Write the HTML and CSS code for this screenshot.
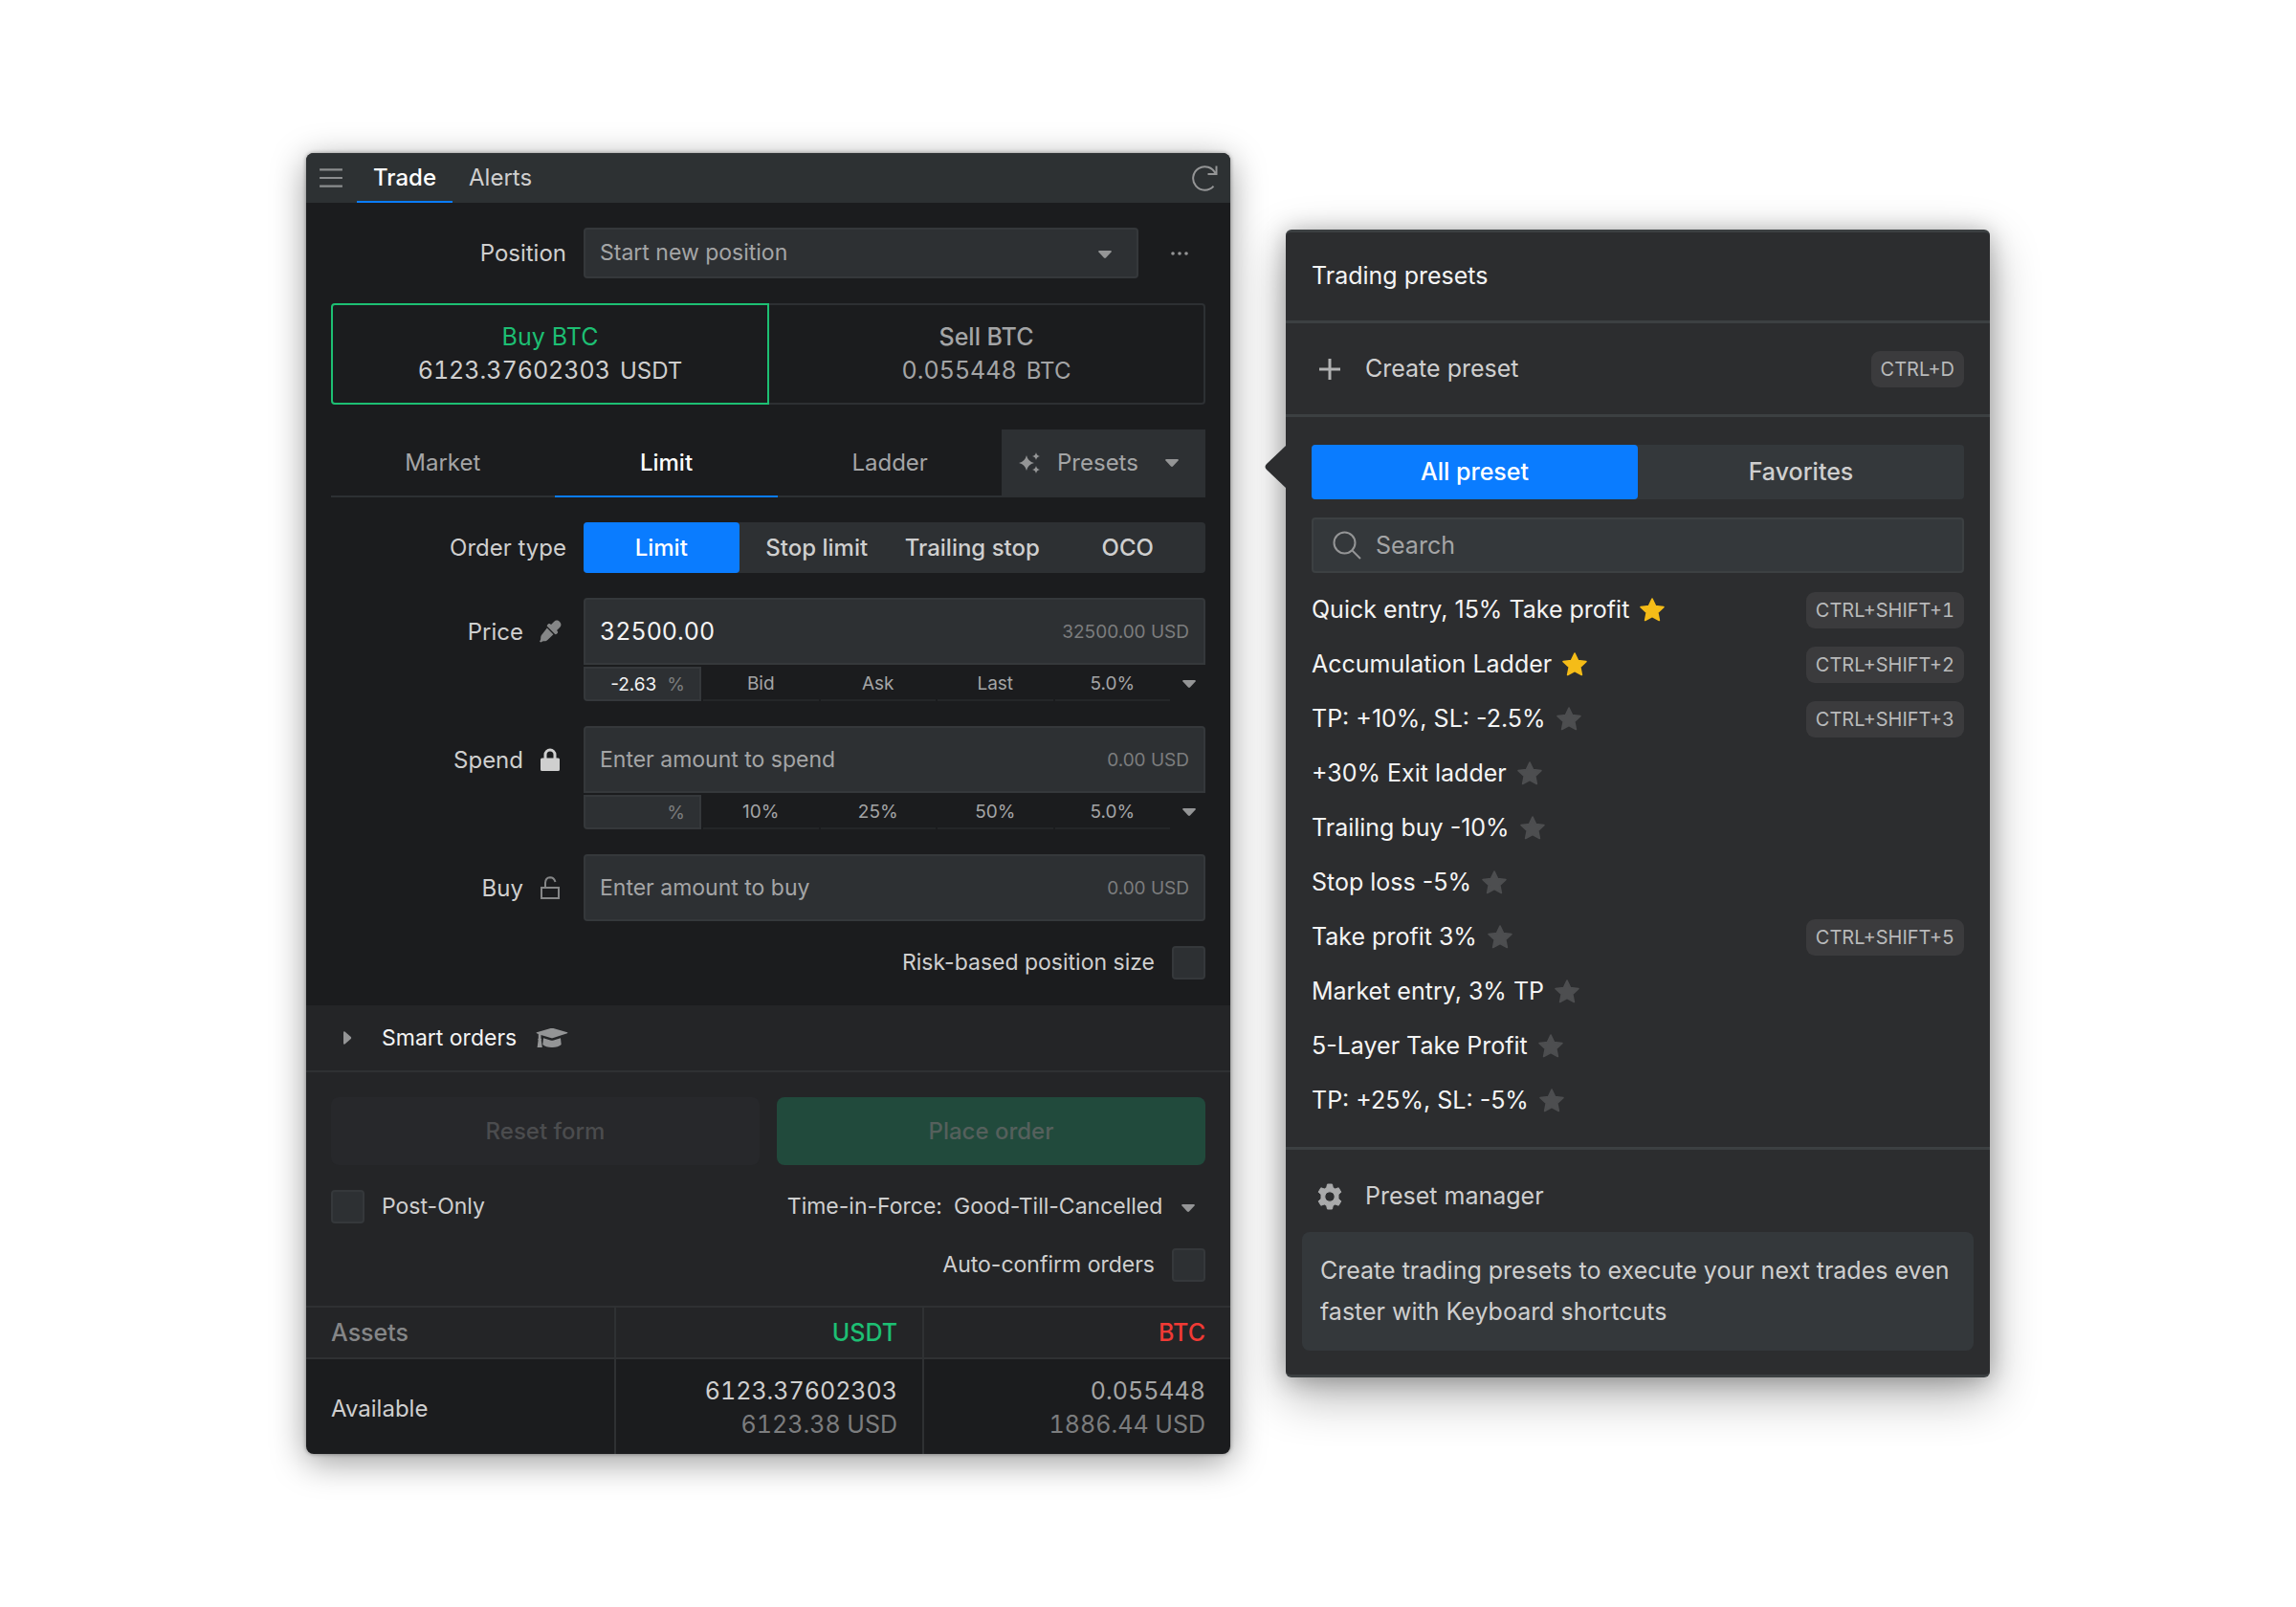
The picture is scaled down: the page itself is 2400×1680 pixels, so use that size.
FILE: index.html
```html
<!DOCTYPE html>
<html lang="en">
<head>
    <meta charset="UTF-8">
    <meta name="viewport" content="width=device-width, initial-scale=1.0">
    <title>Trade</title>
    <link rel="stylesheet" href="styles.css">
</head>
<body>
    <!-- Shared icons -->
    <svg class="sprite" aria-hidden="true">
        <symbol id="caret" viewBox="0 0 16 10">
            <path d="M2 1h12q1.500 .3.600 1.500L9 8.500q-1 .9-2 0L1.400 2.500Q.5 1.300 2 1z"/>
        </symbol>
        <symbol id="star" viewBox="0 0 24 24">
            <path d="M12 1l3.300 7 7.700.9-5.700 5.200 1.500 7.600L12 18l-6.800 3.700 1.500-7.600L1 8.900 8.700 8z" stroke-width="1.500" stroke-linejoin="round"/>
        </symbol>
    </svg>

    <main class="page">
        <section class="trade">
            <header class="trade-header">
                <button class="icon-btn" aria-label="Menu">
                    <svg class="icon-menu" viewBox="0 0 24 20"><path d="M1 2h22M1 10h22M1 18h22"/></svg>
                </button>
                <nav class="top-tabs">
                    <a href="#trade" class="active">Trade</a>
                    <a href="#alerts">Alerts</a>
                </nav>
                <button class="icon-btn refresh" aria-label="Refresh">
                    <svg class="icon-refresh" viewBox="0 0 28 28"><path d="M25.500 1.500v8.500h-9M24.500 9.500A12.200 12.200 0 1 0 22.500 22.600"/></svg>
                </button>
            </header>

            <form class="order-form" id="orderForm">
                <div class="row">
                    <label class="row-label" for="position">Position</label>
                    <div class="position-field">
                        <div class="select-wrap">
                            <select id="position">
                                <option>Start new position</option>
                            </select>
                            <svg class="caret"><use href="#caret"/></svg>
                        </div>
                        <button type="button" class="more" aria-label="More">
                            <svg viewBox="0 0 18 4"><circle cx="2" cy="2" r="1.800"/><circle cx="9" cy="2" r="1.800"/><circle cx="16" cy="2" r="1.800"/></svg>
                        </button>
                    </div>
                </div>

                <div class="sides">
                    <button type="button" class="side buy">
                        <span class="side-name">Buy BTC</span>
                        <span class="side-amount"><span class="number">6123.37602303</span><span>USDT</span></span>
                    </button>
                    <button type="button" class="side sell">
                        <span class="side-name">Sell BTC</span>
                        <span class="side-amount"><span class="number">0.055448</span><span>BTC</span></span>
                    </button>
                </div>

                <div class="order-tabs">
                    <button type="button">Market</button>
                    <button type="button" class="active">Limit</button>
                    <button type="button">Ladder</button>
                    <button type="button" class="presets-btn">
                        <svg class="icon-sparkle" viewBox="0 0 24 24"><path d="M9 4q1.500 6.500 8 8-6.500 1.500-8 8-1.500-6.500-8-8 6.500-1.500 8-8zM19 1q.7 3.300 4 4-3.300.7-4 4-.7-3.300-4-4 3.300-.7 4-4zM19 15q.7 3.300 4 4-3.300.7-4 4-.7-3.300-4-4 3.300-.7 4-4z"/></svg>
                        <span>Presets</span>
                        <svg class="caret"><use href="#caret"/></svg>
                    </button>
                </div>

                <div class="row">
                    <span class="row-label">Order type</span>
                    <div class="segmented">
                        <button type="button" class="active">Limit</button>
                        <button type="button">Stop limit</button>
                        <button type="button">Trailing stop</button>
                        <button type="button">OCO</button>
                    </div>
                </div>

                <div class="row">
                    <label class="row-label tall" for="price">Price
                        <svg class="icon-label muted" viewBox="0 0 24 24"><path d="M22 2c2 2 1.800 4.200.3 5.700L19 11l.8.900c.6.700.4 1.500-.1 2l-.9.900c-.6.500-1.300.5-1.900 0L9.200 7.100c-.6-.6-.5-1.300 0-1.900l.9-.9c.6-.5 1.400-.6 2 0l.9.800L16.300 1.700C17.800.200 20 0 22 2zM8.800 8.600l6.600 6.600-6 5.800c-1 1-2.200 1.300-3.400 1.200-1.400 0-2.500.2-3.500 1.300L1 22.800c.8-1.500 1.200-2.200 1.200-3.600 0-1.800.4-3 1.400-4z"/></svg>
                    </label>
                    <div class="field with-steps">
                        <div class="amount">
                            <input type="text" class="number" id="price" value="32500.00">
                            <span class="unit">32500.00 USD</span>
                        </div>
                        <div class="steps">
                            <label class="percent"><input type="text" value="-2.63" aria-label="Price change"><span>%</span></label>
                            <button type="button">Bid</button>
                            <button type="button">Ask</button>
                            <button type="button">Last</button>
                            <button type="button">5.0%</button>
                            <button type="button" class="steps-more" aria-label="More"><svg class="caret"><use href="#caret"/></svg></button>
                        </div>
                    </div>
                </div>

                <div class="row">
                    <label class="row-label tall" for="spend">Spend
                        <svg class="icon-label light" viewBox="0 0 24 24"><path d="M3.500 10.500h2V7a6.500 6.500 0 0 1 13 0v3.500h2q1.500 0 1.500 1.500v10.500q0 1.500-1.500 1.500h-17Q2 24 2 22.500V12q0-1.500 1.500-1.500zm5 0h7V7a3.500 3.500 0 0 0-7 0z"/></svg>
                    </label>
                    <div class="field with-steps">
                        <div class="amount">
                            <input type="text" id="spend" placeholder="Enter amount to spend">
                            <span class="unit">0.00 USD</span>
                        </div>
                        <div class="steps">
                            <label class="percent"><input type="text" aria-label="Spend percent"><span>%</span></label>
                            <button type="button">10%</button>
                            <button type="button">25%</button>
                            <button type="button">50%</button>
                            <button type="button">5.0%</button>
                            <button type="button" class="steps-more" aria-label="More"><svg class="caret"><use href="#caret"/></svg></button>
                        </div>
                    </div>
                </div>

                <div class="row">
                    <label class="row-label tall" for="buy">Buy
                        <svg class="icon-label outline" viewBox="0 0 24 24"><path d="M3 12h18v11H3zM7 12V7q.3-5.500 5-5.700Q16 1.300 17.500 6"/></svg>
                    </label>
                    <div class="field">
                        <div class="amount">
                            <input type="text" id="buy" placeholder="Enter amount to buy">
                            <span class="unit">0.00 USD</span>
                        </div>
                    </div>
                </div>

                <label class="check end">Risk-based position size <input type="checkbox"></label>
            </form>

            <button class="smart-orders">
                <svg class="icon-right" viewBox="0 0 10 16"><path d="M1 2.200q.2-1.500 1.500-.7l6.300 5.600q.9.900 0 1.800l-6.300 5.600Q1.200 15.300 1 13.800z"/></svg>
                <span>Smart orders</span>
                <svg class="icon-cap" viewBox="0 0 34 22"><path d="M17 1q.7-.2 1.400 0L33 5.300q1 .5 0 1L18.400 11q-1.400.4-2.800 0L5.500 7.900v3.600q1 .8.300 1.900l1 7.600H1.600l1-7.600q-.9-1.100.2-1.900V7L1 6.300q-1-.5 0-1L15.600 1q.7-.2 1.400 0zM8 11.200l7.200 2.200q1.800.5 3.600 0l7.200-2.200.7 6.800q-3 3-9.700 3.100-6.700-.1-9.700-3.100z"/></svg>
            </button>

            <div class="actions">
                <div class="action-buttons">
                    <button type="reset" form="orderForm" class="reset" disabled>Reset form</button>
                    <button type="submit" form="orderForm" class="place" disabled>Place order</button>
                </div>
                <div class="action-options">
                    <label class="check"><input type="checkbox"> Post-Only</label>
                    <div class="tif">
                        <label for="tif">Time-in-Force:</label>
                        <div class="select-wrap plain">
                            <select id="tif">
                                <option>Good-Till-Cancelled</option>
                            </select>
                            <svg class="caret"><use href="#caret"/></svg>
                        </div>
                    </div>
                </div>
                <label class="check end">Auto-confirm orders <input type="checkbox"></label>
            </div>

            <table class="assets">
                <thead>
                    <tr><th>Assets</th><th class="green">USDT</th><th class="red">BTC</th></tr>
                </thead>
                <tbody>
                    <tr>
                        <td>Available</td>
                        <td><span class="number bright">6123.37602303</span><span class="number usd">6123.38 USD</span></td>
                        <td><span class="number">0.055448</span><span class="number usd">1886.44 USD</span></td>
                    </tr>
                </tbody>
            </table>
        </section>

        <aside class="presets">
            <svg class="arrow" viewBox="0 0 22 44"><path d="M22 0L2 19q-3 3 0 6l20 19z"/></svg>
            <h2>Trading presets</h2>
            <button class="preset-action">
                <svg class="icon-plus" viewBox="0 0 22 22"><path d="M11 0v22M0 11h22"/></svg>
                <span>Create preset</span>
                <kbd>CTRL+D</kbd>
            </button>

            <div class="preset-body">
                <div class="segmented big">
                    <button class="active">All preset</button>
                    <button>Favorites</button>
                </div>
                <label class="search">
                    <svg viewBox="0 0 30 30"><circle cx="12.500" cy="12.500" r="11"/><path d="M20.500 20.500l8.500 8.500"/></svg>
                    <input type="text" placeholder="Search" aria-label="Search">
                </label>
                <ul class="preset-list">
                    <li><a href="#">Quick entry, 15% Take profit</a><button class="star on" aria-label="Favorite"><svg><use href="#star"/></svg></button><kbd>CTRL+SHIFT+1</kbd></li>
                    <li><a href="#">Accumulation Ladder</a><button class="star on" aria-label="Favorite"><svg><use href="#star"/></svg></button><kbd>CTRL+SHIFT+2</kbd></li>
                    <li><a href="#">TP: +10%, SL: -2.5%</a><button class="star" aria-label="Favorite"><svg><use href="#star"/></svg></button><kbd>CTRL+SHIFT+3</kbd></li>
                    <li><a href="#">+30% Exit ladder</a><button class="star" aria-label="Favorite"><svg><use href="#star"/></svg></button></li>
                    <li><a href="#">Trailing buy -10%</a><button class="star" aria-label="Favorite"><svg><use href="#star"/></svg></button></li>
                    <li><a href="#">Stop loss -5%</a><button class="star" aria-label="Favorite"><svg><use href="#star"/></svg></button></li>
                    <li><a href="#">Take profit 3%</a><button class="star" aria-label="Favorite"><svg><use href="#star"/></svg></button><kbd>CTRL+SHIFT+5</kbd></li>
                    <li><a href="#">Market entry, 3% TP</a><button class="star" aria-label="Favorite"><svg><use href="#star"/></svg></button></li>
                    <li><a href="#">5-Layer Take Profit</a><button class="star" aria-label="Favorite"><svg><use href="#star"/></svg></button></li>
                    <li><a href="#">TP: +25%, SL: -5%</a><button class="star" aria-label="Favorite"><svg><use href="#star"/></svg></button></li>
                </ul>
            </div>

            <button class="preset-action manager">
                <svg class="icon-gear" viewBox="0 0 28 28"><path fill-rule="evenodd" d="M11.500 1h5l.8 3.600 2.400 1.400 3.500-1.200 2.600 4.400-2.800 2.500v4.600l2.800 2.500-2.600 4.400-3.500-1.200-2.400 1.400-.8 3.600h-5l-.8-3.600-2.400-1.400-3.500 1.200-2.600-4.400L5 16.300v-4.600L2.200 9.200l2.600-4.400L8.300 6l2.400-1.400zM14 8.800a5.200 5.200 0 1 0 0 10.400 5.200 5.200 0 0 0 0-10.400z"/></svg>
                <span>Preset manager</span>
            </button>
            <p class="hint">Create trading presets to execute your next trades even faster with Keyboard shortcuts</p>
        </aside>
    </main>
</body>
</html>
```
FILE: styles.css
```css
* {
    box-sizing: border-box;
}
body {
    margin: 0;
    min-height: 100vh;
    display: flex;
    align-items: center;
    justify-content: center;
    background-color: #fff;
    color: #cfcfcf;
    font-family: Inter, "Liberation Sans", sans-serif;
    font-size: 24px;
    line-height: 35px;
}
button,
input,
select {
    font: inherit;
    color: inherit;
    margin: 0;
    padding: 0;
    border: none;
    border-radius: 0;
    background: none;
    outline: none;
}
button {
    cursor: pointer;
}
a {
    color: inherit;
    text-decoration: none;
}
svg {
    display: block;
    flex-shrink: 0;
    fill: #949596;
}
.sprite {
    position: absolute;
    width: 0;
    height: 0;
}
.caret {
    width: 16px;
    height: 10px;
}
.page {
    width: 100%;
    max-width: 1760px;
    display: grid;
    grid-template-columns: 966fr 736fr;
    gap: 58px;
    align-items: center;
}

/* Trade panel */
.trade {
    border-radius: 8px;
    background-color: #1b1c1e;
    box-shadow: 0 8px 36px rgba(0, 0, 0, 0.4), 0 0 4px rgba(0, 0, 0, 0.4);
    overflow: hidden;
}
.trade-header {
    height: 52px;
    padding: 0 12px 0 13px;
    display: flex;
    align-items: stretch;
    background-color: #2d3133;
}
.icon-btn {
    display: flex;
    align-items: center;
}
.icon-menu {
    width: 26px;
    height: 22px;
    fill: none;
    stroke: #8b8d8e;
    stroke-width: 2;
}
.icon-refresh {
    width: 28px;
    height: 28px;
    fill: none;
    stroke: #949596;
    stroke-width: 2;
}
.refresh {
    margin-left: auto;
}
.top-tabs {
    display: flex;
    margin-left: 14px;
}
.top-tabs a {
    padding: 8px 17px;
    line-height: 35px;
}
.top-tabs .active {
    color: #fff;
    font-weight: 500;
    border-bottom: 2px solid #0a7cff;
}
.order-form {
    padding: 26px 26px 27px;
    display: flex;
    flex-direction: column;
    gap: 26px;
}
.row {
    display: grid;
    grid-template-columns: 246px 1fr;
    gap: 18px;
}
.row-label {
    display: flex;
    align-items: center;
    justify-content: flex-end;
}
.row-label.tall {
    height: 70px;
    gap: 16px;
    padding-right: 5px;
}
.icon-label {
    width: 24px;
    height: 24px;
}
.icon-label.muted {
    fill: #858687;
}
.icon-label.light {
    fill: #cfcfcf;
}
.icon-label.outline {
    fill: none;
    stroke: #858687;
    stroke-width: 2;
}
.position-field {
    display: flex;
}
.select-wrap {
    position: relative;
    flex: 1;
    font-size: 23px;
}
.select-wrap select {
    width: 100%;
    height: 53px;
    padding: 0 15px;
    appearance: none;
    border: 2px solid #35383b;
    border-radius: 4px;
    background-color: #2d3033;
    color: #a4a5a6;
}
.select-wrap .caret {
    position: absolute;
    right: 27px;
    top: 50%;
    margin-top: -4px;
    pointer-events: none;
}
.more {
    width: 70px;
    padding-left: 34px;
}
.more svg {
    width: 18px;
    height: 4px;
}
.sides {
    display: flex;
}
.side {
    flex: 1;
    height: 106px;
    display: flex;
    flex-direction: column;
    align-items: center;
    justify-content: center;
    border: 2px solid #2d3033;
}
.side.buy {
    border-color: #1dbf73;
    border-radius: 4px 0 0 4px;
}
.side.sell {
    border-left: none;
    border-radius: 0 4px 4px 0;
    color: #a4a5a6;
}
.side-name {
    font-size: 25px;
    font-weight: 500;
}
.buy .side-name {
    color: #1dbf73;
    font-weight: 400;
}
.side-amount {
    display: flex;
    gap: 10px;
}
.number {
    font-size: 25px;
    font-variant-numeric: tabular-nums;
}
.order-tabs {
    display: grid;
    grid-template-columns: 1fr 1fr 1fr 213px;
    height: 71px;
}
.order-tabs button {
    border-bottom: 2px solid #2d3033;
    color: #a4a5a6;
}
.order-tabs .active {
    border-bottom-color: #0a7cff;
    color: #fff;
    font-weight: 500;
}
.order-tabs .presets-btn {
    display: flex;
    align-items: center;
    gap: 17px;
    padding: 0 27px 0 17px;
    background-color: #2d3033;
}
.presets-btn .caret {
    margin-left: auto;
}
.icon-sparkle {
    width: 24px;
    height: 24px;
}
.segmented {
    display: flex;
    height: 53px;
    border-radius: 4px;
    background-color: #2d3033;
}
.segmented button {
    flex: 1 1 0;
    white-space: nowrap;
    font-weight: 500;
}
.segmented .active {
    border-radius: 4px;
    background-color: #0a7cff;
    color: #fff;
}
.amount {
    height: 70px;
    padding: 0 15px;
    display: flex;
    align-items: center;
    border: 2px solid #35383b;
    border-radius: 4px;
    background-color: #2d3033;
}
.with-steps .amount {
    border-radius: 4px 4px 0 0;
}
.amount input {
    flex: 1;
    min-width: 0;
    height: 60px;
    font-size: 23px;
    color: #f4f4f4;
}
.amount .number {
    font-size: 25px;
}
input::placeholder {
    color: #a4a5a6;
    opacity: 1;
}
.unit {
    font-size: 19px;
    color: #7c7d7e;
}
.steps {
    height: 36px;
    margin-top: 2px;
    display: grid;
    grid-template-columns: 123px repeat(4, 1fr) 35px;
    column-gap: 2px;
    font-size: 19px;
    line-height: 31px;
    color: #a4a5a6;
}
.steps button {
    border-bottom: 2px solid #242628;
}
.steps .steps-more {
    display: flex;
    align-items: center;
    justify-content: center;
    border-bottom: none;
}
.percent {
    display: flex;
    align-items: center;
    gap: 11px;
    padding: 0 15px;
    border: 2px solid #35383b;
    border-radius: 0 0 0 4px;
    background-color: #2d3033;
    color: #7c7d7e;
}
.percent input {
    flex: 1;
    width: 10px;
    text-align: right;
    color: #f4f4f4;
}
.check {
    display: flex;
    align-items: center;
    gap: 18px;
    font-size: 23px;
}
.check.end {
    align-self: flex-end;
}
.check input {
    appearance: none;
    width: 35px;
    height: 35px;
    border: 2px solid #35383b;
    border-radius: 4px;
    background-color: #2d3033;
}
.smart-orders {
    width: 100%;
    height: 70px;
    padding: 0 38px;
    display: flex;
    align-items: center;
    background-color: #242527;
    border-bottom: 2px solid #2f3133;
    color: #f4f4f4;
    font-size: 23px;
}
.icon-right {
    width: 10px;
    height: 16px;
    margin-right: 31px;
}
.icon-cap {
    width: 34px;
    height: 22px;
    margin-left: 20px;
}
.actions {
    padding: 26px 26px 25px;
    display: flex;
    flex-direction: column;
    gap: 26px;
    background-color: #242527;
}
.action-buttons {
    display: flex;
    gap: 18px;
}
.action-buttons button {
    flex: 1;
    height: 71px;
    border-radius: 8px;
    font-weight: 500;
}
.reset {
    background-color: #27282b;
    color: #4b4c4e;
}
.place {
    background-color: #214a3c;
    color: #55605c;
}
.action-options {
    display: flex;
    justify-content: space-between;
}
.tif {
    display: flex;
    gap: 12px;
    font-size: 23px;
}
.plain select {
    width: auto;
    height: 35px;
    padding: 0 44px 0 0;
    border: none;
    background: none;
    color: #cfcfcf;
}
.plain .caret {
    right: 10px;
}
.assets {
    width: 100%;
    border-collapse: separate;
    border-spacing: 0;
    table-layout: fixed;
    text-align: right;
}
.assets th,
.assets td {
    padding: 0 26px;
    border-top: 2px solid #2f3133;
    border-left: 2px solid #2f3133;
    font-weight: 400;
}
.assets th {
    height: 54px;
    background-color: #242527;
    font-size: 25px;
}
.assets td {
    height: 101px;
    padding-top: 3px;
    color: #a4a5a6;
}
.assets th:first-child,
.assets td:first-child {
    border-left: none;
    text-align: left;
}
.assets th:first-child {
    color: #858687;
    font-weight: 500;
}
.assets td:first-child {
    color: #cfcfcf;
}
.assets .green {
    color: #1dbf73;
    font-weight: 500;
}
.assets .red {
    color: #f03a35;
    font-weight: 500;
}
.assets span {
    display: block;
}
.assets .bright {
    color: #cfcfcf;
}
.assets .usd {
    color: #7c7d7e;
}

/* Presets popover */
.presets {
    position: relative;
    display: flex;
    flex-direction: column;
    border-top: 3px solid #3c4042;
    border-bottom: 3px solid #3c4042;
    border-radius: 6px;
    background-color: #2c2d2f;
    box-shadow: 0 18px 52px rgba(0, 0, 0, 0.32), 0 2px 24px rgba(0, 0, 0, 0.26);
    font-size: 25px;
}
.arrow {
    position: absolute;
    right: 100%;
    top: 223px;
    width: 22px;
    height: 44px;
    fill: #2c2d2f;
}
.presets h2 {
    margin: 0;
    padding: 28px 27px 29px;
    font-size: 25px;
    font-weight: 400;
    line-height: 35px;
    color: #f4f4f4;
}
.preset-action {
    display: flex;
    align-items: center;
    height: 98px;
    padding: 0 27px 0 32px;
    border-top: 3px solid #3c4042;
}
.icon-plus {
    width: 28px;
    height: 22px;
    margin-right: 23px;
    fill: none;
    stroke: #b0b1b2;
    stroke-width: 3;
}
.icon-gear {
    width: 28px;
    height: 28px;
    margin-right: 23px;
    fill: #a9aaab;
    stroke: #a9aaab;
    stroke-width: 1;
    stroke-linejoin: round;
}
kbd {
    margin-left: auto;
    padding: 0 10px;
    border-radius: 9px;
    background-color: #3b3b3d;
    color: #b8b9ba;
    font-family: inherit;
    font-size: 20px;
    font-variant-numeric: tabular-nums;
    line-height: 38px;
}
.preset-body {
    padding: 29px 27px 20px;
    border-top: 3px solid #3c4042;
}
.segmented.big {
    height: 57px;
    background-color: #34383b;
}
.search {
    height: 58px;
    margin-top: 19px;
    padding: 0 20px;
    display: flex;
    align-items: center;
    gap: 15px;
    border: 2px solid #3c4042;
    border-radius: 4px;
    background-color: #34383b;
}
.search svg {
    width: 30px;
    height: 30px;
    fill: none;
    stroke: #949596;
    stroke-width: 2;
}
.search input {
    flex: 1;
    min-width: 0;
}
.preset-list {
    margin: 10px 0 0;
    padding: 0;
    list-style: none;
}
.preset-list li {
    height: 57px;
    display: flex;
    align-items: center;
    color: #f4f4f4;
}
.star {
    margin-left: 11px;
}
.star svg {
    width: 26px;
    height: 26px;
    fill: #4d4e50;
    stroke: #4d4e50;
}
.star.on svg {
    fill: #f5bc18;
    stroke: #f5bc18;
}
.manager {
    height: 89px;
    padding-top: 11px;
}
.hint {
    margin: 0 17px 25px;
    padding: 19px;
    border-radius: 8px;
    background-color: #34383b;
    line-height: 43px;
}
```
